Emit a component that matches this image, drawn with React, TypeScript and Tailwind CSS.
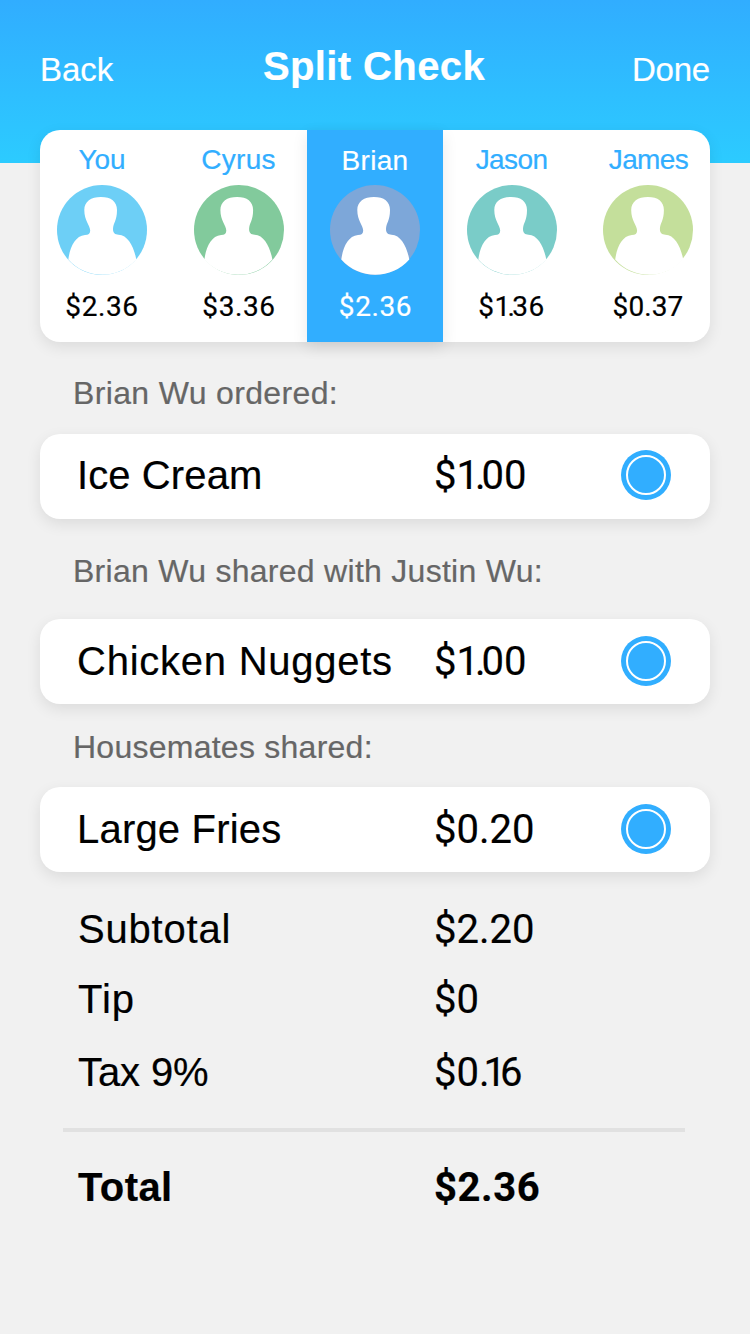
import clsx from 'clsx'

type Person = {
  name: string
  amount: string
  color: string
  shift: number
  cell?: string
  nameClass?: string
  amountClass: string
  selected?: boolean
}

const people: Person[] = [
  { name: 'You', amount: '$2.36', color: '#6dcff6', shift: 0, cell: 'pr-1.5', nameClass: 'tracking-[-0.1px]', amountClass: 'tracking-[0.6px]' },
  { name: 'Cyrus', amount: '$3.36', color: '#82ca9c', shift: -0.9, nameClass: 'tracking-[0.3px]', amountClass: 'pl-px tracking-[0.6px]' },
  { name: 'Brian', amount: '$2.36', color: '#7da7d9', shift: 0, nameClass: 'tracking-[0.3px]', amountClass: 'pl-px tracking-[0.6px]', selected: true },
  { name: 'Jason', amount: '$1.36', color: '#7accc8', shift: 0, nameClass: 'tracking-[-0.6px]', amountClass: 'tracking-[0.5px]' },
  { name: 'James', amount: '$0.37', color: '#c4df9b', shift: 0.9, cell: 'pl-1.5', nameClass: 'pl-px tracking-[-0.6px]', amountClass: 'tracking-[0.1px]' },
]

const orders = [
  {
    title: 'Brian Wu ordered:',
    titleClass: 'mt-[31px] mb-[21px] tracking-[0.35px]',
    item: 'Ice Cream',
    itemClass: 'tracking-[0.1px]',
    price: '$1.00',
    rowClass: 'pb-[3px]',
  },
  {
    title: 'Brian Wu shared with Justin Wu:',
    titleClass: 'mt-8 mb-7 tracking-[0.28px]',
    item: 'Chicken Nuggets',
    itemClass: 'tracking-[0.75px]',
    price: '$1.00',
    rowClass: 'pb-px',
  },
  {
    title: 'Housemates shared:',
    titleClass: 'mt-[23px] mb-5 tracking-[0.25px]',
    item: 'Large Fries',
    itemClass: 'tracking-[0.2px]',
    price: '$0.20',
    rowClass: 'pb-px',
  },
]

const totals = [
  { label: 'Subtotal', value: '$2.20', labelClass: 'tracking-[0.8px]', rowClass: '' },
  { label: 'Tip', value: '$0', labelClass: 'tracking-[1px]', rowClass: 'mt-[22px]' },
  { label: 'Tax 9%', value: '$0.16', labelClass: 'tracking-[-0.1px]', rowClass: 'mt-[25px]' },
]

// Closes up the gap between a point and a neighbouring 1
const Price = ({ value, className }: { value: string; className?: string }) => (
  <span className={clsx("-mb-px pt-px font-['Roboto','Liberation_Sans',sans-serif]", className)}>
    {value.split(/(1\.|\.1)/).map((part, i) =>
      i % 2 ? (
        <span key={i} className={part === '.1' ? 'tracking-[-0.15em]' : 'tracking-[-0.1em]'}>
          {part}
        </span>
      ) : (
        part
      ),
    )}
  </span>
)

const Avatar = ({ color, shift }: { color: string; shift: number }) => (
  <svg viewBox="0 0 90 90" className="mt-2.5 block size-[90px] overflow-visible">
    <circle cx="45" cy="45" r="45" fill={color} />
    <path
      transform={`translate(${shift} 0)`}
      fill="#fff"
      d="M44 12C54 12 60 16.500 60 25C60 36 56 38 56 44C56 48 58 49.700 61.500 49.700C71 50 77 62 79.300 74.500A45.300 45.300 0 0 1 11.300 74.500C13 62 18 51 28 50C31.500 50 33.200 48.500 33.200 45.500C33 40 27.300 36 27.300 25C27.300 16.500 34 12 44 12Z"
    />
  </svg>
)

const Radio = () => (
  <div className="flex size-[50px] items-center justify-center rounded-full bg-[#31aeff]">
    <div className="size-10 rounded-full border-2 border-white"></div>
  </div>
)

const App = () => {
  return (
    <main className="h-[1334px] w-[750px] overflow-hidden bg-[#f1f1f1] font-['Liberation_Sans',Arial,sans-serif] text-black [-webkit-text-stroke:0.2px_currentColor]">
      <header className="grid h-[163px] grid-cols-[1fr_auto_1fr] items-start bg-linear-to-b from-[#31adff] to-[#2ccbff] px-10 pt-[46px] leading-10 text-white">
        <button className="mt-1 text-left text-[33px]">Back</button>
        <h1 className="pr-0.5 text-[40px] font-bold tracking-[0.4px]">Split Check</h1>
        <button className="mt-1 text-right text-[33px] tracking-[-0.2px]">Done</button>
      </header>

      <section className="relative mx-10 -mt-[33px] grid h-[212px] grid-cols-[130px_137px_136px_137px_130px] rounded-[20px] bg-white text-[28px] leading-8 shadow-[0_5px_15px_rgba(0,0,0,0.09)]">
        {people.map((person) => (
          <div
            key={person.name}
            className={clsx(
              'flex flex-col items-center pt-[14px]',
              person.cell,
              person.selected && 'bg-[#31aeff] text-white shadow-[0_5px_15px_rgba(0,0,0,0.09)]',
            )}
          >
            <span className={clsx(person.nameClass, person.selected ? '-mb-0.5 pt-px' : '-mb-px text-[#31aeff]')}>
              {person.name}
            </span>
            <Avatar color={person.color} shift={person.shift} />
            <Price value={person.amount} className={clsx('mt-[15px]', person.amountClass)} />
          </div>
        ))}
      </section>

      {orders.map((order) => (
        <section key={order.title} className="mx-10">
          <h2 className={clsx('pl-[33px] text-[32px] leading-10 text-[#666]', order.titleClass)}>{order.title}</h2>
          <div
            className={clsx(
              'grid h-[85px] grid-cols-[357px_187px_50px] items-center rounded-[20px] bg-white pl-[37px] text-[40px] shadow-[0_5px_15px_rgba(0,0,0,0.09)]',
              order.rowClass,
            )}
          >
            <span className={order.itemClass}>{order.item}</span>
            <Price value={order.price} />
            <Radio />
          </div>
        </section>
      ))}

      <section className="mt-[33px] text-[40px] leading-[48px]">
        {totals.map((row) => (
          <div key={row.label} className={clsx('grid grid-cols-[356px_1fr] pl-[78px]', row.rowClass)}>
            <span className={row.labelClass}>{row.label}</span>
            <Price value={row.value} />
          </div>
        ))}
        <hr className="mt-8 ml-[63px] h-1 w-[622px] border-0 bg-[#e1e1e1]" />
        <div className="mt-[31px] grid grid-cols-[356px_1fr] pl-[78px] font-bold">
          <span className="tracking-[0.4px]">Total</span>
          <Price value="$2.36" className="tracking-[0.6px]" />
        </div>
      </section>
    </main>
  )
}

export default App
